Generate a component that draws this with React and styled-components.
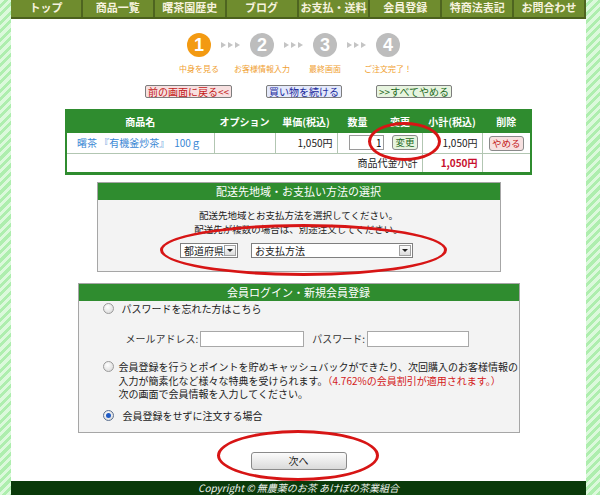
import React from 'react';
import styled, { createGlobalStyle, css } from 'styled-components';

const GREEN = '#2f8c2f';
const JP = `"Noto Sans CJK JP", "Noto Sans", sans-serif`;

const GlobalStyle = createGlobalStyle`
  * { box-sizing: border-box; }
  html, body { margin: 0; padding: 0; }
  body {
    background: repeating-linear-gradient(135deg, #dcf9dc 0, #dcf9dc 3px, #aeeeae 3px, #aeeeae 6px);
    font-family: ${JP};
    color: #222;
  }
`;

const navItems = ['トップ', '商品一覧', '曙茶園歴史', 'ブログ', 'お支払・送料', '会員登録', '特商法表記', 'お問合わせ'];
const steps = [
  { n: 1, label: '中身を見る', active: true },
  { n: 2, label: 'お客様情報入力' },
  { n: 3, label: '最終画面' },
  { n: 4, label: 'ご注文完了！' },
];

const tones = {
  red: css`background: #f7e0e0; color: #c41a1a;`,
  blue: css`background: #e4e9fb; color: #1a2a9c;`,
  green: css`background: #e7f4df; color: #1d6a1d;`,
};

const App = () => {
  return (
    <>
      <GlobalStyle />
      <Page>
        <Nav>
          {navItems.map((item) => (
            <NavItem key={item}>{item}</NavItem>
          ))}
        </Nav>

        <Steps>
          {steps.map((s, i) => (
            <React.Fragment key={s.n}>
              {i > 0 && (
                <Arrows>
                  <Tri />
                  <Tri />
                  <Tri />
                </Arrows>
              )}
              <Step>
                <StepCircle $active={s.active}>{s.n}</StepCircle>
                <StepLabel>{s.label}</StepLabel>
              </Step>
            </React.Fragment>
          ))}
        </Steps>

        <ButtonRow>
          <Pill $tone='red'>前の画面に戻る&lt;&lt;</Pill>
          <Pill $tone='blue'>買い物を続ける</Pill>
          <Pill $tone='green'>&gt;&gt;すべてやめる</Pill>
        </ButtonRow>

        <CartTable>
          <colgroup>
            <Col $w={148} />
            <Col $w={61} />
            <Col $w={62} />
            <Col $w={41} />
            <Col $w={44} />
            <Col $w={60} />
            <Col $w={49} />
          </colgroup>
          <thead>
            <tr>
              <Th>商品名</Th>
              <Th>オプション</Th>
              <Th>単価(税込)</Th>
              <Th>数量</Th>
              <Th>変更</Th>
              <Th>小計(税込)</Th>
              <Th>削除</Th>
            </tr>
          </thead>
          <tbody>
            <tr>
              <Td $pad={10} $color='#3a87d4'>曙茶 『有機釜炒茶』　100ｇ</Td>
              <Td />
              <Td $align='right'>1,050円</Td>
              <Td colSpan={2} $align='right'>
                <QtyWrap>
                  <QtyInput readOnly value='1' />
                  <MiniButton $tone='green'>変更</MiniButton>
                </QtyWrap>
              </Td>
              <Td $align='right'>1,050円</Td>
              <Td $align='center'>
                <MiniButton $tone='red'>やめる</MiniButton>
              </Td>
            </tr>
            <tr>
              <Td colSpan={5} $align='right' $h={20}>商品代金小計</Td>
              <Td $align='right' $h={20} $color='#c8102e' $bold>1,050円</Td>
              <Td $h={20} />
            </tr>
          </tbody>
        </CartTable>

        <Panel $mt={7} $w={404}>
          <PanelHeader>配送先地域・お支払い方法の選択</PanelHeader>
          <DeliveryBody>
            <div>配送先地域とお支払方法を選択してください。</div>
            <div>配送先が複数の場合は、別途注文してください。</div>
            <SelectRow>
              <SelectBox $w={58}>
                都道府県
                <SelectArrow />
              </SelectBox>
              <SelectBox $w={162}>
                お支払方法
                <SelectArrow />
              </SelectBox>
            </SelectRow>
          </DeliveryBody>
        </Panel>

        <Panel $mt={11} $w={442}>
          <PanelHeader>会員ログイン・新規会員登録</PanelHeader>
          <MemberBody>
            <OptionRow>
              <Radio />
              <OptionText $gap={8}>パスワードを忘れた方はこちら</OptionText>
            </OptionRow>
            <LoginRow>
              <FieldLabel>メールアドレス:</FieldLabel>
              <TextField $w={104} />
              <FieldLabel $ml={8}>パスワード:</FieldLabel>
              <TextField $w={102} />
            </LoginRow>
            <OptionRow $mt={13}>
              <Radio />
              <OptionText $gap={5}>
                会員登録を行うとポイントを貯めキャッシュバックができたり、次回購入のお客様情報の
                <br />
                入力が簡素化など様々な特典を受けられます。
                <Notice>（4.762%の会員割引が適用されます。）</Notice>
                <br />
                次の画面で会員情報を入力してください。
              </OptionText>
            </OptionRow>
            <OptionRow $mt={8}>
              <Radio $checked />
              <OptionText $gap={9}>会員登録をせずに注文する場合</OptionText>
            </OptionRow>
          </MemberBody>
        </Panel>

        <NextButton>次へ</NextButton>

        <Footer>Copyright © 無農薬のお茶 あけぼの茶業組合</Footer>

        <Marker $x={357} $y={122} $w={73} $h={39} />
        <Marker $x={149} $y={224} $w={287} $h={52} />
        <Marker $x={206} $y={430} $w={162} $h={51} />
      </Page>
    </>
  );
};

export default App;

const Page = styled.div`
  position: relative;
  width: 575px;
  height: 495px;
  margin-left: 11px;
  background: #fff;
  display: flex;
  flex-direction: column;
  align-items: center;
  overflow: hidden;
`;

const Nav = styled.nav`
  align-self: stretch;
  display: grid;
  grid-template-columns: repeat(8, 1fr);
  height: 22px;
  background: #6f8c2e;
  border-bottom: 2px solid #4b601d;
`;

const NavItem = styled.div`
  border-right: 2px solid #4e6420;
  color: #f6f2de;
  font-size: 11px;
  font-weight: bold;
  line-height: 15px;
  text-align: center;
  white-space: nowrap;
  overflow: hidden;
`;

const Steps = styled.div`
  display: flex;
  margin-top: 14px;
  padding-right: 10px;
`;

const Step = styled.div`
  width: 40px;
  display: flex;
  flex-direction: column;
  align-items: center;
`;

const StepCircle = styled.div`
  width: 24px;
  height: 24px;
  border-radius: 50%;
  background: ${({ $active }) => ($active ? '#f39a12' : '#bdbdbd')};
  color: #fff;
  font-family: 'Liberation Sans', sans-serif;
  font-size: 18px;
  font-weight: bold;
  line-height: 24px;
  text-align: center;
`;

const StepLabel = styled.div`
  margin-top: 7px;
  font-size: 8px;
  line-height: 10px;
  color: #f0a030;
  white-space: nowrap;
`;

const Arrows = styled.div`
  width: 23px;
  height: 24px;
  display: flex;
  align-items: center;
  justify-content: center;
  gap: 2px;
`;

const Tri = styled.span`
  width: 0;
  height: 0;
  border-left: 5px solid #c4c4c4;
  border-top: 3px solid transparent;
  border-bottom: 3px solid transparent;
`;

const ButtonRow = styled.div`
  display: flex;
  gap: 34px;
  margin-top: 11px;
`;

const Pill = styled.span`
  height: 13px;
  padding: 0 2px;
  border: 1px solid #7d7d7d;
  border-radius: 2px;
  font-size: 10px;
  line-height: 11px;
  white-space: nowrap;
  ${({ $tone }) => tones[$tone]}
`;

const CartTable = styled.table`
  margin-top: 11px;
  width: 465px;
  border-collapse: collapse;
  border: 2px solid ${GREEN};
  border-bottom-width: 3px;
  font-size: 10px;
  table-layout: fixed;
`;

const Col = styled.col`
  width: ${({ $w }) => $w}px;
`;

const Th = styled.th`
  height: 22px;
  padding: 0;
  background: ${GREEN};
  color: #fff;
  font-weight: bold;
  text-align: center;
  border: 1px solid ${GREEN};
  white-space: nowrap;
`;

const Td = styled.td`
  height: ${({ $h }) => $h || 21}px;
  padding: 0 ${({ $pad }) => $pad ?? 4}px;
  border: 1px solid #b2c6b2;
  text-align: ${({ $align }) => $align || 'left'};
  color: ${({ $color }) => $color || '#222'};
  font-weight: ${({ $bold }) => ($bold ? 'bold' : 'normal')};
  white-space: nowrap;
`;

const QtyWrap = styled.div`
  display: flex;
  justify-content: flex-end;
  align-items: center;
  gap: 8px;
`;

const QtyInput = styled.input`
  width: 35px;
  height: 15px;
  padding: 0 2px;
  border: 1px solid #9a9a9a;
  font-family: ${JP};
  font-size: 10px;
  text-align: right;
  outline: none;
`;

const MiniButton = styled.span`
  display: inline-block;
  height: 15px;
  padding: 0 2px;
  border: 1px solid #8a8a8a;
  border-radius: 3px;
  font-size: 9.5px;
  line-height: 13px;
  ${({ $tone }) => tones[$tone]}
`;

const Panel = styled.section`
  margin-top: ${({ $mt }) => $mt}px;
  width: ${({ $w }) => $w}px;
  border: 1px solid #a6a6a6;
  background: #f3f3f3;
`;

const PanelHeader = styled.div`
  height: 17px;
  background: ${GREEN};
  color: #fff;
  font-size: 11px;
  line-height: 17px;
  text-align: center;
`;

const DeliveryBody = styled.div`
  padding: 8px 0 13px;
  font-size: 9.5px;
  line-height: 14px;
  text-align: center;
`;

const SelectRow = styled.div`
  display: flex;
  justify-content: center;
  gap: 13px;
  margin-top: 7px;
  padding-right: 4px;
`;

const SelectBox = styled.div`
  display: flex;
  align-items: center;
  justify-content: space-between;
  width: ${({ $w }) => $w}px;
  height: 15px;
  padding: 0 1px 0 3px;
  border: 1px solid #7f7f7f;
  background: #fff;
  font-size: 10px;
  line-height: 13px;
`;

const SelectArrow = styled.span`
  width: 12px;
  height: 11px;
  border: 1px solid #a0a0a0;
  background: linear-gradient(#fdfdfd, #dcdcdc);
  display: flex;
  align-items: center;
  justify-content: center;
  &::after {
    content: '';
    border-left: 3px solid transparent;
    border-right: 3px solid transparent;
    border-top: 3px solid #222;
  }
`;

const MemberBody = styled.div`
  padding: 1px 10px 10px 24px;
  font-size: 10px;
  line-height: 13.5px;
`;

const OptionRow = styled.div`
  display: flex;
  align-items: flex-start;
  margin-top: ${({ $mt }) => $mt || 0}px;
`;

const OptionText = styled.div`
  margin-left: ${({ $gap }) => $gap}px;
  white-space: nowrap;
`;

const Notice = styled.span`
  color: #d42020;
`;

const Radio = styled.span`
  flex: none;
  width: 11px;
  height: 11px;
  margin-top: 1px;
  border-radius: 50%;
  border: 1px solid #9a9a9a;
  background: radial-gradient(circle at 40% 35%, #ffffff, #d4d4d4);
  display: flex;
  align-items: center;
  justify-content: center;
  ${({ $checked }) =>
    $checked &&
    css`
      border-color: #5d7190;
      &::after {
        content: '';
        width: 5px;
        height: 5px;
        border-radius: 50%;
        background: #1e5bc6;
      }
    `}
`;

const LoginRow = styled.div`
  display: flex;
  align-items: center;
  margin: 16px 0 0 23px;
  height: 16px;
`;

const FieldLabel = styled.span`
  margin: 0 2px 0 ${({ $ml }) => $ml || 0}px;
  color: #333;
`;

const TextField = styled.span`
  width: ${({ $w }) => $w}px;
  height: 16px;
  border: 1px solid #a8a8a8;
  background: #fff;
`;

const NextButton = styled.div`
  margin-top: 19px;
  width: 96px;
  height: 18px;
  border: 1px solid #8a8a8a;
  border-radius: 3px;
  background: linear-gradient(#fbfbfb, #dadada);
  font-size: 10px;
  line-height: 16px;
  text-align: center;
`;

const Footer = styled.footer`
  align-self: stretch;
  margin-top: 11px;
  flex: 1;
  background: #0a3a0a;
  color: #eef3ee;
  font-size: 10px;
  font-style: italic;
  line-height: 14px;
  text-align: center;
`;

const Marker = styled.div`
  position: absolute;
  left: ${({ $x }) => $x}px;
  top: ${({ $y }) => $y}px;
  width: ${({ $w }) => $w}px;
  height: ${({ $h }) => $h}px;
  border: 3px solid #d71515;
  border-radius: 50%;
  pointer-events: none;
`;
